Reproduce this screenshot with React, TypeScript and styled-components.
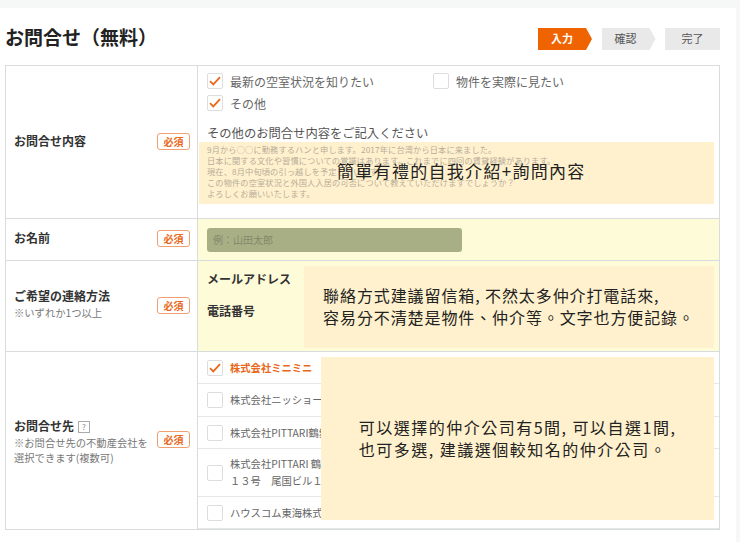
import React from "react";
import styled, { createGlobalStyle } from "styled-components";

const GlobalStyle = createGlobalStyle`
  html, body {
    margin: 0;
    height: 542px;
    overflow: hidden;
    background: #f6f8f8;
    font-family: "Noto Sans CJK JP", "Liberation Sans", sans-serif;
  }
`;

const Page = styled.div`
  width: 736px;
  height: 534px;
  margin-top: 8px;
  padding: 20px 17px 0 5px;
  box-sizing: border-box;
  background: #ffffff;
`;

const Header = styled.div`
  display: flex;
  justify-content: space-between;
  align-items: center;
  height: 22px;
  margin-bottom: 15px;
`;

const Title = styled.h1`
  margin: 0 0 4px;
  font-size: 19px;
  line-height: 22px;
  font-weight: 700;
  color: #222222;
`;

const Steps = styled.div`
  display: flex;
  gap: 9.5px;
  margin-right: -1px;
`;

const Step = styled.div<{ $active?: boolean; $last?: boolean }>`
  width: ${(p) => (p.$last ? 55 : 54)}px;
  height: 22px;
  padding: 0 ${(p) => (p.$last ? 0 : 6)}px 2px 0;
  box-sizing: border-box;
  display: flex;
  align-items: center;
  justify-content: center;
  font-size: 11px;
  font-weight: ${(p) => (p.$active ? 700 : 400)};
  color: ${(p) => (p.$active ? "#ffffff" : "#555555")};
  background: ${(p) => (p.$active ? "#ef6400" : "#e9e9e9")};
  clip-path: ${(p) =>
    p.$last
      ? "none"
      : "polygon(0 0, 48px 0, 100% 50%, 48px 100%, 0 100%)"};
`;

const FormTable = styled.div`
  width: 715px;
  border: 1px solid #d8dcdc;
  box-sizing: border-box;
`;

const Row = styled.div<{ $height: number }>`
  display: grid;
  grid-template-columns: 192px 1fr;
  height: ${(p) => p.$height}px;
  box-sizing: border-box;
  border-bottom: 1px solid #d8dcdc;
  &:last-child {
    border-bottom: none;
  }
`;

const LabelCell = styled.div`
  display: flex;
  align-items: center;
  justify-content: space-between;
  padding: 0 7px 2px 8px;
  border-right: 1px solid #d8dcdc;
`;

const LabelText = styled.div<{ $drop?: number }>`
  margin-top: ${(p) => p.$drop ?? 0}px;
  margin-bottom: 2px;
  font-size: 12px;
  line-height: 15px;
  font-weight: 700;
  color: #333333;
`;

const LabelNote = styled.div`
  margin-top: 2px;
  font-size: 10.3px;
  line-height: 15px;
  font-weight: 400;
  color: #777777;
`;

const Required = styled.span`
  flex: none;
  width: 33px;
  height: 17px;
  box-sizing: border-box;
  display: flex;
  align-items: center;
  justify-content: center;
  border: 1px solid #f0a070;
  border-radius: 3px;
  font-size: 10px;
  font-weight: 700;
  color: #e8691c;
`;

const HelpIcon = styled.span`
  display: inline-flex;
  align-items: center;
  justify-content: center;
  width: 10px;
  height: 10px;
  margin-left: 4px;
  border: 1px solid #aaaaaa;
  font-size: 8px;
  font-weight: 400;
  line-height: 1;
  color: #888888;
  vertical-align: 1px;
`;

const FieldCell = styled.div<{ $tint?: boolean }>`
  position: relative;
  min-width: 0;
  background: ${(p) => (p.$tint ? "#fefbd9" : "transparent")};
`;

const InquiryField = styled.div`
  padding: 7px 5px 0 9px;
`;

const CheckGrid = styled.div`
  display: grid;
  grid-template-columns: 226px 1fr;
  row-gap: 6px;
`;

const CheckRow = styled.label`
  display: flex;
  align-items: center;
  gap: 7px;
  height: 16px;
  font-size: 12px;
  color: #666666;
`;

const Box = styled.span`
  flex: none;
  width: 16px;
  height: 16px;
  box-sizing: border-box;
  display: flex;
  align-items: center;
  justify-content: center;
  background: #ffffff;
  border: 1px solid #dddddd;
  border-radius: 2px;
`;

const Prompt = styled.div`
  margin-top: 13px;
  font-size: 12.3px;
  line-height: 18px;
  color: #555555;
`;

const TextArea = styled.div`
  position: relative;
  height: 62px;
  margin-left: -8px;
  padding: 2px 0 0 8px;
  box-sizing: border-box;
  background: #fff1cd;
  font-size: 8.2px;
  line-height: 11px;
  letter-spacing: 0.15px;
  color: #b8ad9a;
  white-space: nowrap;
  overflow: hidden;
`;

const CenterNote = styled.div`
  position: absolute;
  top: 19px;
  left: 138px;
  font-family: "Noto Sans CJK TC", sans-serif;
  font-size: 17px;
  line-height: 20px;
  letter-spacing: 1.3px;
  color: #222222;
`;

const NameField = styled.div`
  height: 100%;
  display: flex;
  align-items: center;
  padding-left: 9px;
`;

const NameInput = styled.div`
  width: 255px;
  height: 24px;
  padding-left: 6px;
  box-sizing: border-box;
  display: flex;
  align-items: center;
  border-radius: 3px;
  background: #a9af85;
  font-size: 10px;
  color: #82876a;
`;

const ContactField = styled.div`
  display: flex;
  flex-direction: column;
  gap: 16px;
  padding: 10px 0 0 9px;
`;

const ContactLabel = styled.div`
  font-size: 12px;
  line-height: 16px;
  font-weight: 700;
  color: #333333;
`;

const Note = styled.div<{
  $top: number;
  $left: number;
  $height: number;
  $spacing: number;
}>`
  position: absolute;
  top: ${(p) => p.$top}px;
  left: ${(p) => p.$left}px;
  right: 5px;
  height: ${(p) => p.$height}px;
  padding-bottom: 2px;
  box-sizing: border-box;
  display: flex;
  align-items: center;
  justify-content: center;
  background: #fff1cd;
  font-family: "Noto Sans CJK TC", sans-serif;
  font-size: 16px;
  line-height: 22px;
  letter-spacing: ${(p) => p.$spacing}px;
  color: #222222;
`;

const Option = styled.div<{ $height: number }>`
  display: flex;
  align-items: center;
  gap: 7px;
  height: ${(p) => p.$height}px;
  padding-left: 9px;
  box-sizing: border-box;
  border-bottom: 1px solid #e6e8e8;
  &:last-child {
    border-bottom: none;
  }
`;

const OptionText = styled.div<{ $checked?: boolean }>`
  padding-bottom: 1px;
  font-size: 10.3px;
  line-height: 17px;
  font-weight: ${(p) => (p.$checked ? 700 : 400)};
  color: ${(p) => (p.$checked ? "#e8691c" : "#666666")};
`;

const Check = () => (
  <svg width="12" height="10" viewBox="0 0 12 10" fill="none">
    <path d="M1 5.2 L4.3 8.4 L11 1.2" stroke="#e8691c" strokeWidth="1.8" />
  </svg>
);

const Checkbox = ({ checked }: { checked?: boolean }) => (
  <Box>{checked ? <Check /> : null}</Box>
);

const placeholderLines = [
  "9月から○○に勤務するハンと申します。2017年に台湾から日本に来ました。",
  "日本に関する文化や習慣についての覚識はあります。これまでに四回の賃貸経験があります。",
  "現在、8月中旬頃の引っ越しを予定しています。",
  "この物件の空室状況と外国人入居の可否について教えていただけますでしょうか？",
  "よろしくお願いいたします。",
];

const options = [
  { name: ["株式会社ミニミニ"], height: 32, checked: true },
  { name: ["株式会社ニッショー"], height: 33 },
  { name: ["株式会社PITTARI鶴舞店"], height: 32 },
  { name: ["株式会社PITTARI 鶴舞店", "１３号　尾国ビル１階"], height: 48 },
  { name: ["ハウスコム東海株式会社"], height: 32 },
];

function App() {
  return (
    <Page>
      <GlobalStyle />
      <Header>
        <Title>お問合せ（無料）</Title>
        <Steps>
          <Step $active>入力</Step>
          <Step>確認</Step>
          <Step $last>完了</Step>
        </Steps>
      </Header>
      <FormTable>
        <Row $height={153}>
          <LabelCell>
            <LabelText>お問合せ内容</LabelText>
            <Required>必須</Required>
          </LabelCell>
          <FieldCell>
            <InquiryField>
              <CheckGrid>
                <CheckRow>
                  <Checkbox checked />
                  最新の空室状況を知りたい
                </CheckRow>
                <CheckRow>
                  <Checkbox />
                  物件を実際に見たい
                </CheckRow>
                <CheckRow>
                  <Checkbox checked />
                  その他
                </CheckRow>
              </CheckGrid>
              <Prompt>その他のお問合せ内容をご記入ください</Prompt>
              <TextArea>
                {placeholderLines.map((line) => (
                  <div key={line}>{line}</div>
                ))}
                <CenterNote>簡單有禮的自我介紹+詢問內容</CenterNote>
              </TextArea>
            </InquiryField>
          </FieldCell>
        </Row>
        <Row $height={42}>
          <LabelCell>
            <LabelText>お名前</LabelText>
            <Required>必須</Required>
          </LabelCell>
          <FieldCell $tint>
            <NameField>
              <NameInput>例：山田太郎</NameInput>
            </NameField>
          </FieldCell>
        </Row>
        <Row $height={91}>
          <LabelCell>
            <LabelText>
              ご希望の連絡方法
              <LabelNote>※いずれか1つ以上</LabelNote>
            </LabelText>
            <Required>必須</Required>
          </LabelCell>
          <FieldCell $tint>
            <ContactField>
              <ContactLabel>メールアドレス</ContactLabel>
              <ContactLabel>電話番号</ContactLabel>
            </ContactField>
            <Note $top={5} $left={106} $height={82} $spacing={0.9}>
              <div>
                聯絡方式建議留信箱, 不然太多仲介打電話來,
                <br />
                容易分不清楚是物件、仲介等。文字也方便記錄。
              </div>
            </Note>
          </FieldCell>
        </Row>
        <Row $height={177}>
          <LabelCell>
            <LabelText $drop={6}>
              お問合せ先<HelpIcon>?</HelpIcon>
              <LabelNote>
                ※お問合せ先の不動産会社を
                <br />
                選択できます(複数可)
              </LabelNote>
            </LabelText>
            <Required>必須</Required>
          </LabelCell>
          <FieldCell>
            {options.map((option) => (
              <Option key={option.name[0]} $height={option.height}>
                <Checkbox checked={option.checked} />
                <OptionText $checked={option.checked}>
                  {option.name.map((line) => (
                    <div key={line}>{line}</div>
                  ))}
                </OptionText>
              </Option>
            ))}
            <Note $top={5} $left={123} $height={163} $spacing={1.5}>
              <div>
                可以選擇的仲介公司有5間, 可以自選1間,
                <br />
                也可多選, 建議選個較知名的仲介公司。
              </div>
            </Note>
          </FieldCell>
        </Row>
      </FormTable>
    </Page>
  );
}

export default App;
